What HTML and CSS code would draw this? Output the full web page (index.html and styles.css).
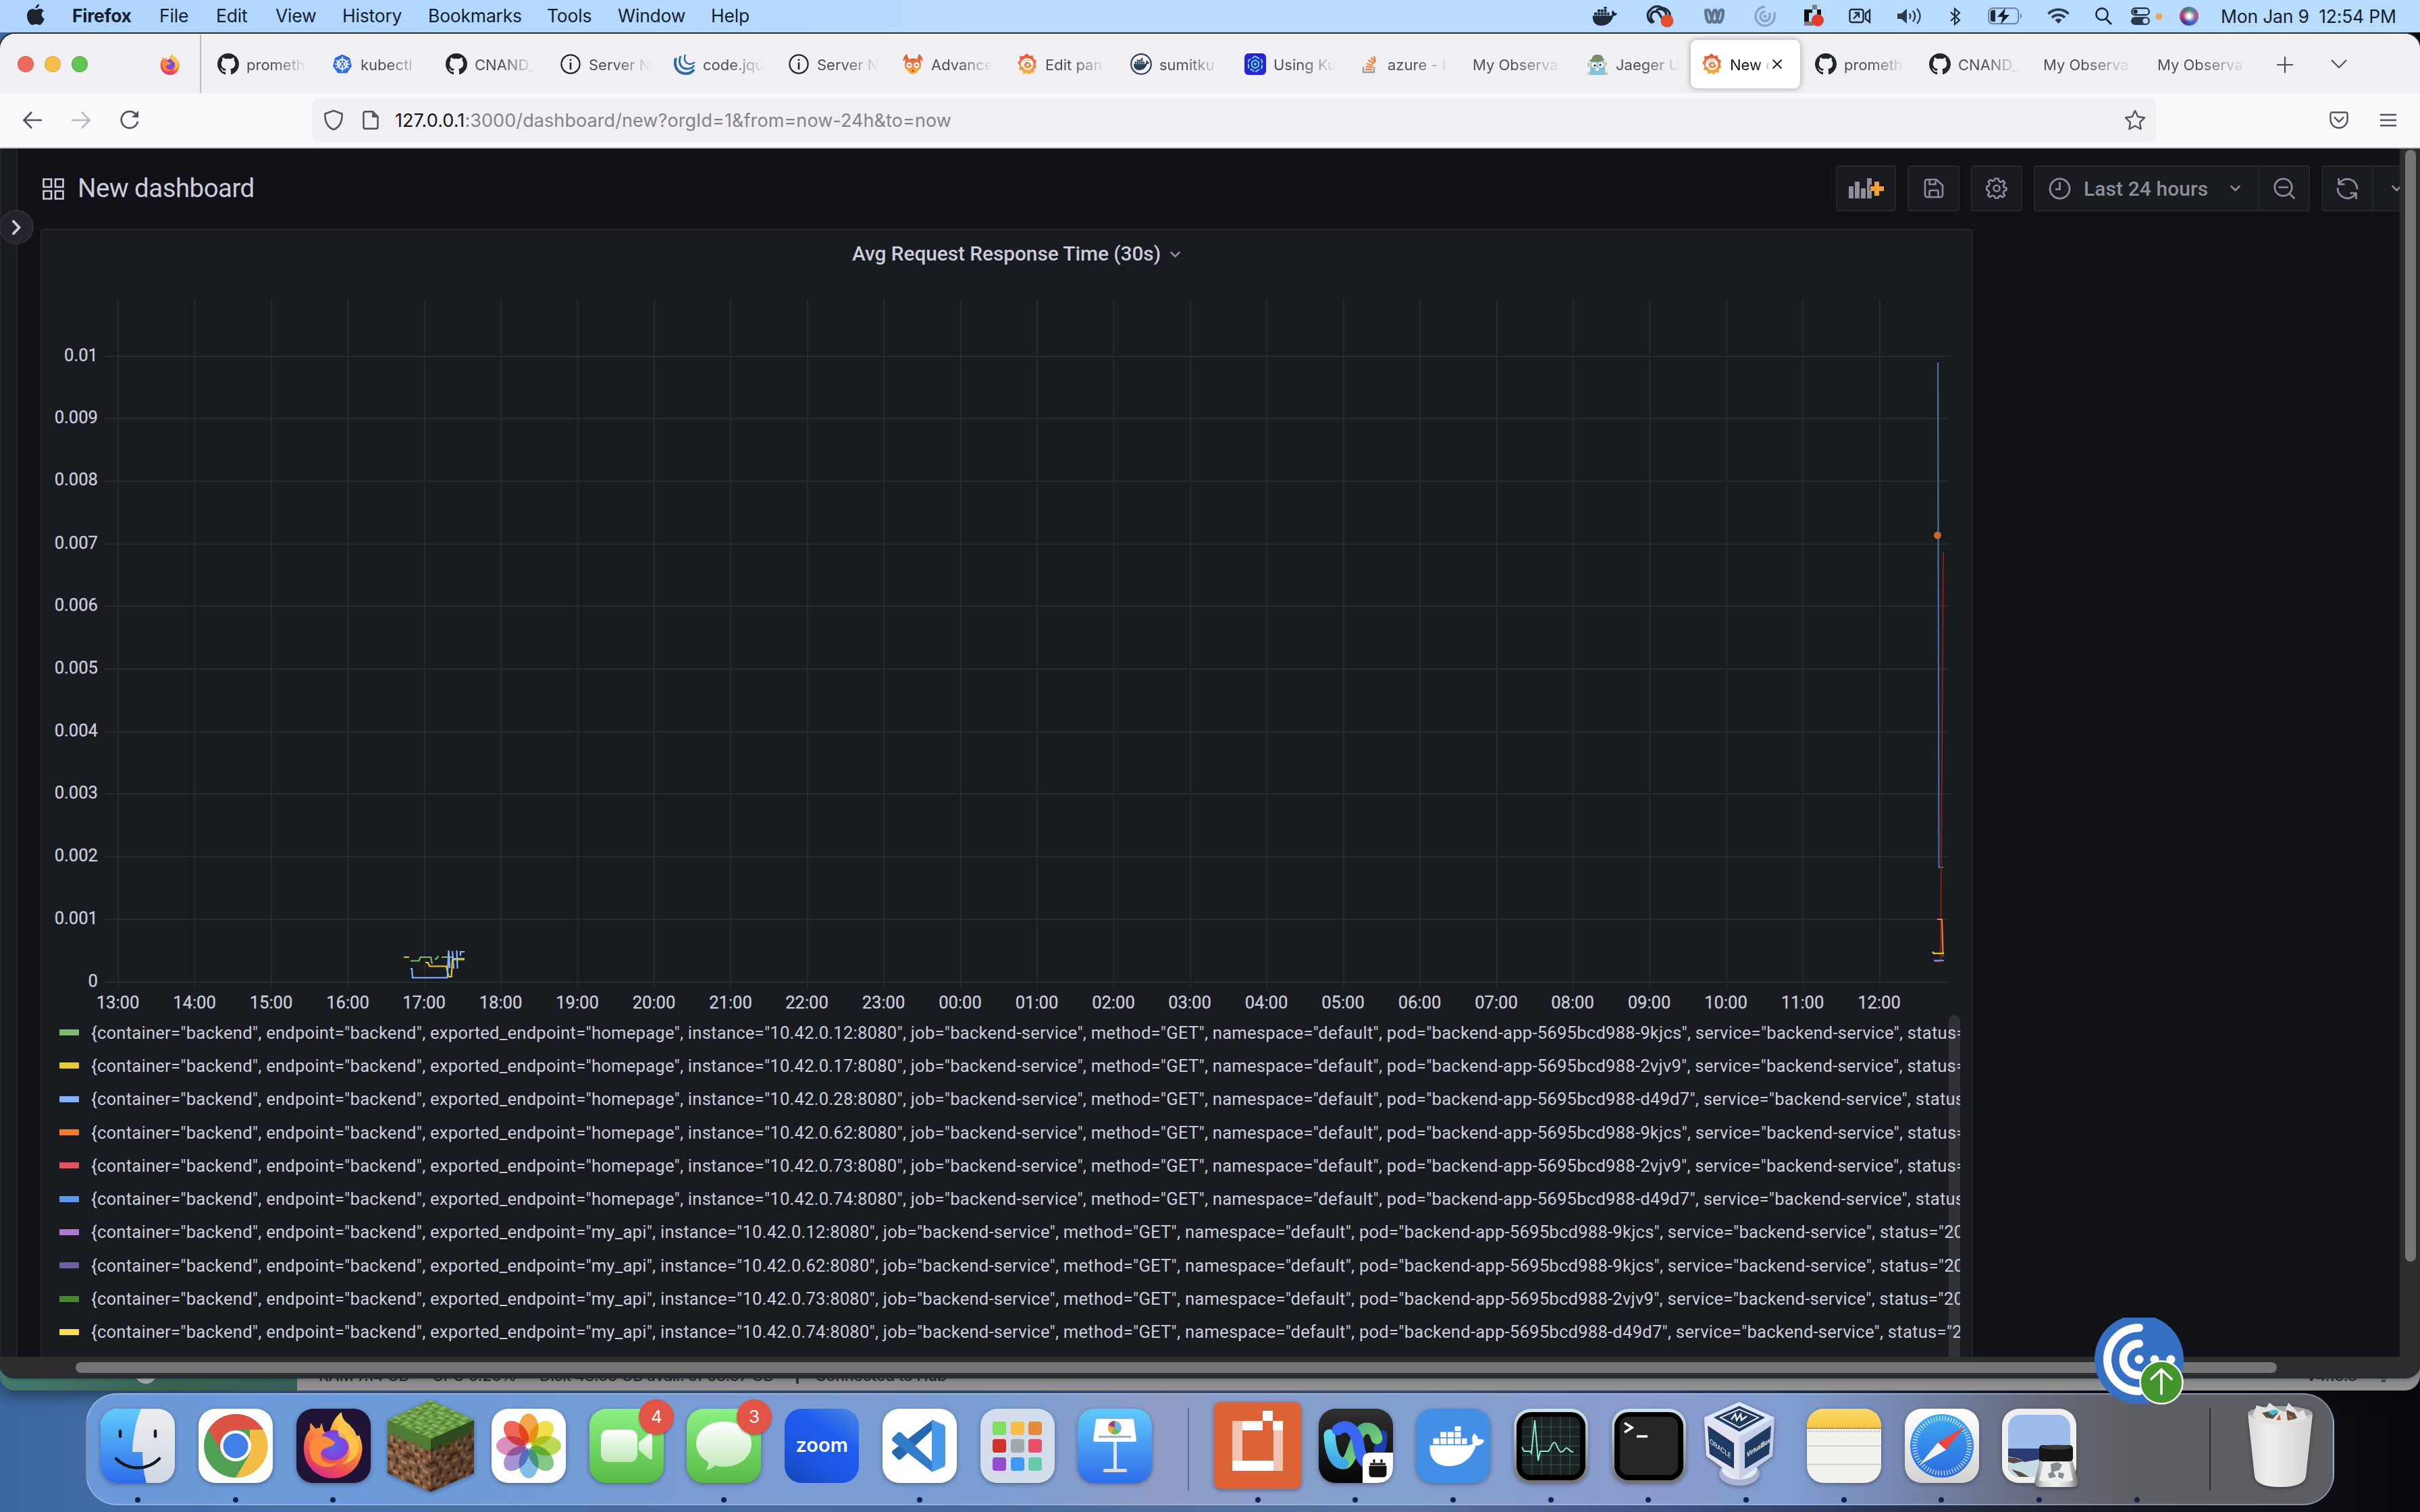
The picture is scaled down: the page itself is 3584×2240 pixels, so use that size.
FILE: index.html
```html
<!DOCTYPE html>
<html lang="en">
<head>
<meta charset="utf-8">
<title>New dashboard - Grafana</title>
<link rel="stylesheet" href="styles.css">
</head>
<body>
<svg class="defs" width="0" height="0">
  <defs>
    <linearGradient id="gGrafana" x1="0" y1="0" x2="0" y2="1"><stop offset="0" stop-color="#e0533a"/><stop offset=".5" stop-color="#e77b3b"/><stop offset="1" stop-color="#f2c441"/></linearGradient>
    <linearGradient id="gFlame" x1=".8" y1="0" x2=".3" y2="1"><stop offset="0" stop-color="#ffe45c"/><stop offset=".4" stop-color="#fb9a3a"/><stop offset=".75" stop-color="#f0504f"/><stop offset="1" stop-color="#d42d88"/></linearGradient>
    <radialGradient id="gGlobe"><stop offset="0" stop-color="#5a67e8"/><stop offset="1" stop-color="#8a3bd8"/></radialGradient>
    <linearGradient id="gFinder" x1="0" y1="0" x2="0" y2="1"><stop offset="0" stop-color="#5fcbfa"/><stop offset="1" stop-color="#2f6ceb"/></linearGradient>
    <linearGradient id="gPaper" x1="0" y1="0" x2="0" y2="1"><stop offset="0" stop-color="#ececee"/><stop offset="1" stop-color="#d0d8e4"/></linearGradient>
    <linearGradient id="gGreen" x1="0" y1="0" x2="0" y2="1"><stop offset="0" stop-color="#8bf182"/><stop offset="1" stop-color="#58bb46"/></linearGradient>
    <linearGradient id="gBubble" x1="0" y1="0" x2="0" y2="1"><stop offset="0" stop-color="#fff"/><stop offset="1" stop-color="#bfe8b6"/></linearGradient>
    <linearGradient id="gDark" x1="0" y1="0" x2="0" y2="1"><stop offset="0" stop-color="#303030"/><stop offset="1" stop-color="#050505"/></linearGradient>
    <linearGradient id="gMetal" x1="0" y1="0" x2="0" y2="1"><stop offset="0" stop-color="#cfe3ea"/><stop offset="1" stop-color="#74716d"/></linearGradient>
    <linearGradient id="gNotes" x1="0" y1="0" x2="0" y2="1"><stop offset="0" stop-color="#fbd96a"/><stop offset="1" stop-color="#f7c544"/></linearGradient>
    <linearGradient id="gSafari" x1="0" y1="0" x2="0" y2="1"><stop offset="0" stop-color="#3eaaf2"/><stop offset="1" stop-color="#2c69e0"/></linearGradient>
    <linearGradient id="gSilver" x1="0" y1="0" x2="0" y2="1"><stop offset="0" stop-color="#fff"/><stop offset="1" stop-color="#d2d2d2"/></linearGradient>
    <linearGradient id="gTrash" x1="0" y1="0" x2="1" y2="0"><stop offset="0" stop-color="#d8d8d8"/><stop offset=".3" stop-color="#eeeeec"/><stop offset="1" stop-color="#d2d2d2"/></linearGradient>
    <linearGradient id="gGlass" x1="0" y1="0" x2="1" y2="0"><stop offset="0" stop-color="#77797b"/><stop offset=".2" stop-color="#d6d8d8"/><stop offset=".5" stop-color="#f2f3f3"/><stop offset=".8" stop-color="#c4c6c6"/><stop offset="1" stop-color="#66686a"/></linearGradient>
    <linearGradient id="gWeb1" x1="0" y1="0" x2="0" y2="1"><stop offset="0" stop-color="#5fd8ee"/><stop offset="1" stop-color="#3fa4e8"/></linearGradient>
    <linearGradient id="gWeb2" x1="0" y1="0" x2="1" y2="1"><stop offset="0" stop-color="#3a9e8a"/><stop offset="1" stop-color="#8fe36a"/></linearGradient>
    <pattern id="pTop" width="8" height="8" patternUnits="userSpaceOnUse"><rect width="8" height="8" fill="#6b9a47"/><path fill="#86bb5b" d="M0 0h1v1H0zM2 1h2v1H2zM5 0h1v2H5zM1 3h1v1H1zM3 3h1v1H3zM6 3h2v1H6zM0 5h2v1H0zM4 5h1v2H4zM6 6h1v1H6zM2 7h1v1H2z"/><path fill="#557f38" d="M1 1h1v1H1zM4 2h1v1H4zM7 1h1v1H7zM2 4h1v1H2zM5 4h1v1H5zM1 6h1v1H1zM7 5h1v1H7zM3 6h1v2H3zM5 7h1v1H5z"/></pattern>
    <pattern id="pDirt" width="8" height="8" patternUnits="userSpaceOnUse"><rect width="8" height="8" fill="#7d563b"/><path fill="#a87a57" d="M0 1h2v1H0zM3 0h1v1H3zM5 2h2v1H5zM1 4h1v1H1zM4 4h1v1H4zM7 5h1v1H7zM2 6h2v1H2zM5 7h1v1H5z"/><path fill="#4f3423" d="M2 0h1v1H2zM6 0h2v1H6zM3 2h1v2H3zM0 3h1v1H0zM6 4h1v1H6zM2 5h1v1H2zM4 6h1v1H4zM0 7h2v1H0zM7 7h1v1H7z"/><path fill="#80807e" d="M4 1h1v1H4zM1 5h1v1H1z"/></pattern>
  </defs>
  <symbol id="github" viewBox="0 0 16 16"><path fill="#22262b" d="M8 0C3.58 0 0 3.58 0 8c0 3.54 2.29 6.53 5.47 7.59.4.07.55-.17.55-.38 0-.19-.01-.82-.01-1.49-2.01.37-2.53-.49-2.69-.94-.09-.23-.48-.94-.82-1.13-.28-.15-.68-.52-.01-.53.63-.01 1.08.58 1.23.82.72 1.21 1.87.87 2.33.66.07-.52.28-.87.51-1.07-1.78-.2-3.64-.89-3.64-3.95 0-.87.31-1.59.82-2.15-.08-.2-.36-1.02.08-2.12 0 0 .67-.21 2.2.82.64-.18 1.32-.27 2-.27s1.36.09 2 .27c1.53-1.04 2.2-.82 2.2-.82.44 1.1.16 1.92.08 2.12.51.56.82 1.27.82 2.15 0 3.07-1.87 3.75-3.65 3.95.29.25.54.73.54 1.48 0 1.07-.01 1.93-.01 2.2 0 .21.15.46.55.38A8.01 8.01 0 0 0 16 8c0-4.42-3.58-8-8-8z"/></symbol>
  <symbol id="info" viewBox="0 0 32 32"><circle cx="16" cy="16" r="13.600" fill="none" stroke="#222" stroke-width="2.200"/><path stroke="#222" stroke-width="2.600" d="M16 13.500v10.500M16 8.500v2.600"/></symbol>
  <symbol id="grafana" viewBox="0 0 32 32"><path fill="url(#gGrafana)" d="M16 0l3.500 4 5-1 1 5 4.500 3-1.500 5 1.500 5-3 2-.5 6-4-.5-3 3.500-4-3-5 2-1-5-5.500-2 1.500-5L2 14l3.500-4L5 4.500l6-.5z"/><path d="M22.500 17a6 6 0 1 0-6 6.500c5.500 0 8.500-4.500 7.500-9C22.800 10 18.500 7.500 14 8.800c-5 1.500-7 6.500-5.500 11" fill="none" stroke="#f3f1f2" stroke-width="2.600"/><circle cx="17" cy="17" r="2" fill="#f3f1f2"/></symbol>
  <symbol id="whale" viewBox="0 0 100 76"><path d="M2 36h68c4 0 8-1 10-3-3-7-2-14 2-19 5 3 7 7 7 11 4-1 8 0 11 2-2 7-8 10-15 10C78 60 62 76 36 76 12 76 0 60 2 36z"/><path d="M8 23h11v11H8zM21 23h11v11H21zM34 23h11v11H34zM47 23h11v11H47zM60 23h9v11h-9zM21 11h11v10H21zM34 11h11v10H34zM47 11h11v10H47zM47 0h11v9H47z"/></symbol>
  <symbol id="firefox" viewBox="0 0 100 100"><path fill="url(#gFlame)" d="M5 55C5 42 9 32 14 27l1 -11 8 9c2-1 4-1 6-1l3-8 3 12 8 8c2-14 8-28 19-36 1 10 5 14 12 19l3 4c4 3 6 8 8 13l4-1c4 12 5 18 4 24-3 26-22 41-44 41C24 100 5 80 5 55z"/><circle cx="50" cy="50" r="23" fill="url(#gGlobe)"/><path fill="#fb8c3c" d="M16 43c8-7 20-9 28-3l8 5c-1 6-6 7-13 9-6 2-9 6-8 12 2 12 16 14 26 10-10 12-34 8-41-8-3-8-3-17 0-25z"/><path fill="#ffc94a" opacity=".85" d="M62 5c-6 8-8 22-3 32 8 2 14 8 15 18 1 12-4 20-12 24 14-2 26-12 26-26 0-18-16-20-20-30-2-5-3-10-6-18z"/></symbol>
  <symbol id="chev" viewBox="0 0 16 10"><path d="M2 2l6 6 6-6" fill="none" stroke="currentColor" stroke-width="2.600" stroke-linecap="round" stroke-linejoin="round"/></symbol>
</svg>

<header class="menubar">
  <nav class="menus">
    <svg class="apple" viewBox="0 0 28 34"><path d="M19 1c.3 3-2.400 6.400-5.400 6.500C13.200 4.500 16 1.400 19 1zM14.200 9.500c1.700 0 3.200-1.400 6-1.400 2.500 0 4.600 1.400 5.700 3-5 3-4.200 9.600.9 11.700C25.400 26.500 22.500 32 19.500 32c-2 0-2.800-1.200-5.200-1.200-2.500 0-3.300 1.200-5.200 1.200C5 32 1 24.500 1 18.500 1 12 5 8.300 9 8.300c2.300 0 3.900 1.200 5.200 1.200z"/></svg>
    <b class="m-app">Firefox</b><span class="m-file">File</span><span class="m-edit">Edit</span><span class="m-view">View</span><span class="m-hist">History</span><span class="m-book">Bookmarks</span><span class="m-tools">Tools</span><span class="m-win">Window</span><span>Help</span>
  </nav>
  <div class="status">
    <svg width="37" height="28"><use href="#whale"/></svg>
    <svg width="42" height="34" viewBox="0 0 42 34"><path d="M9 27C1 22 0 12 7 7c3-5 12-6 17-2 8 1 12 7 11 12M12 26c-8-5-6-15 1-16 8 0 7 8 12 12M15 8c7-4 14 0 15 7" fill="none" stroke="#1d2a38" stroke-width="3.400"/><circle cx="31" cy="24" r="9.500" fill="#e1502b"/></svg>
    <svg width="32" height="24" viewBox="0 0 32 24"><path d="M3 4c1 10 2 17 6 17s4-18 8-18 2 18 6 18 6-9 6-17c-2-3-5-1-6 2-2 8-3 15-7 15S10 3 7 3 3 3 3 4z" fill="none" stroke="#5f7690" stroke-width="4.500"/></svg>
    <svg width="32" height="32" viewBox="0 0 32 32"><path d="M16 2a14 14 0 1 0 14 14V10M16 9a7 7 0 1 0 7 7v-5" fill="none" stroke="#8aa4c2" stroke-width="3.400"/><circle cx="16" cy="16" r="2.600" fill="#8aa4c2"/></svg>
    <svg width="30" height="34" viewBox="0 0 30 34"><path fill="#111" d="M0 7h7v22H0zM7 7h5v5H7zM19 7h6v8h-6z"/><path fill="#7b7b7b" d="M12 0h7v7h-7zM0 25h14v6H0z"/><circle cx="20" cy="23" r="9" fill="#e23b2e"/></svg>
    <svg class="line" width="33" height="24" viewBox="0 0 33 24"><rect x="1.500" y="2" width="20" height="19" rx="3"/><path d="M7 16l8-9M8.500 7H15v7M25 8l6-5v18l-6-5z"/></svg>
    <svg width="37" height="26" viewBox="0 0 37 26"><path d="M0 9h6l8-7v22l-8-7H0z" fill="#2b3b4c"/><path d="M18 9c2 3 2 5 0 8M23 5c4 5 4 11 0 16M29 2c6 7 6 15 0 22" fill="none" stroke="#2b3b4c" stroke-width="2.400"/></svg>
    <svg width="18" height="27" viewBox="0 0 18 27"><path d="M2 7l13 12-7 6V2l7 6L2 20" fill="none" stroke="#1d2a38" stroke-width="2.200"/></svg>
    <svg width="51" height="26" viewBox="0 0 51 26"><rect x="1.200" y="1.200" width="44" height="23" rx="6" fill="none" stroke="#7288a2" stroke-width="2.200"/><path d="M48 9c3 1 3 6 0 8z" fill="#7288a2"/><path d="M4 7c0-2 1-3 3-3h4v17H7c-2 0-3-1-3-3z" fill="#1d2a38"/><path d="M26 1L14 14h8l-3 11 13-14h-8z" fill="#16202c"/></svg>
    <svg width="33" height="24" viewBox="0 0 33 24"><path d="M1.500 8.500a21 21 0 0 1 30 0M7 14a13.500 13.500 0 0 1 19 0" fill="none" stroke="#2b3b4c" stroke-width="3.800"/><path d="M16.500 23l-5-5.500a7 7 0 0 1 10 0z" fill="#2b3b4c"/></svg>
    <svg width="27" height="26" viewBox="0 0 27 26"><circle cx="11" cy="10" r="8.600" fill="none" stroke="#1d2a38" stroke-width="2.600"/><path d="M17 17l8 8" stroke="#1d2a38" stroke-width="3"/></svg>
    <svg width="28" height="26" viewBox="0 0 28 26"><rect x="1.200" y="1.200" width="25.600" height="10" rx="5" fill="none" stroke="#1d2a38" stroke-width="2.200"/><circle cx="6.500" cy="6.200" r="3.200" fill="#1d2a38"/><rect y="14" width="28" height="12" rx="6" fill="#2b3b4c"/><circle cx="21.500" cy="20" r="4" fill="#b7dbff"/></svg>
    <svg width="11" height="11"><circle cx="5.500" cy="5.500" r="5" fill="#e8a45a"/></svg>
    <span class="siri"></span>
    <span class="clock">Mon Jan 9&nbsp; 12:54 PM</span>
  </div>
</header>

<main class="desktop">
  <section class="docker-window">
    <div class="docker-left"><i></i></div>
    <div class="docker-bar"><span class="d-ram">RAM 7.14 GB</span><span class="d-cpu">CPU 0.26%</span><span class="d-disk">Disk 48.09 GB avail. of 58.37 GB</span><svg width="16" height="26" viewBox="0 0 16 26"><path d="M1 6h14l-1 8-4 4v8H6v-8l-4-4z" fill="#333"/></svg><span class="d-hub">Connected to Hub</span><span class="d-ver">v4.16.3</span><svg class="bell" width="14" height="26" viewBox="0 0 14 26"><path d="M1 12h12M2 17h10M4 22h6" stroke="#333" stroke-width="3"/></svg></div>
  </section>

  <section class="browser">
    <div class="tabstrip">
      <div class="lights"><i class="red"></i><i class="amber"></i><i class="green"></i></div>
      <div class="pinned"><svg width="32" height="32"><use href="#firefox"/></svg></div>
      <div class="tabs">
        <div class="tab"><svg><use href="#github"/></svg><span>prometh</span></div>
        <div class="tab"><svg viewBox="0 0 32 32"><path d="M16 1l11.500 5.500L30.500 19 23 30H9L1.500 19 4.500 6.500z" fill="#326de6" stroke="#fff"/><circle cx="16" cy="16" r="7" fill="none" stroke="#fff" stroke-width="2"/><path stroke="#fff" stroke-width="1.600" d="M16 5v22M6.500 10.500l19 11M6.500 21.500l19-11M5 16h22"/><circle cx="16" cy="16" r="2" fill="#326de6"/></svg><span>kubectl</span></div>
        <div class="tab"><svg><use href="#github"/></svg><span>CNAND_</span></div>
        <div class="tab"><svg><use href="#info"/></svg><span>Server N</span></div>
        <div class="tab"><svg viewBox="0 0 32 32" fill="none" stroke="#2f6ba8"><path d="M3 7C-1 20 6 30 18 30c5 0 9-2 12-6" stroke-width="4"/><path d="M10 4C6 14 10 23 20 23c5 0 8-2 10-5" stroke-width="3"/><path d="M17 2c-3 7 0 13 6 14 4 0 6-1 8-3" stroke-width="2.400"/></svg><span>code.jqu</span></div>
        <div class="tab"><svg><use href="#info"/></svg><span>Server N</span></div>
        <div class="tab"><svg viewBox="0 0 32 32"><path d="M1 12C2 6 4 3 7 1l3 8c3-2 9-2 12 0l3-8c3 2 5 5 6 11l-4-3 1 9c0 4-2 6-4 7-2 4-4 6-8 6s-6-2-8-6c-2-1-4-3-4-7l1-9z" fill="url(#gGrafana)"/><circle cx="10.500" cy="17.500" r="4.200" fill="#fff"/><circle cx="21.500" cy="17.500" r="4.200" fill="#fff"/><path d="M8.500 17.500h4M19.500 17.500h4M14 28l2-2.500 2 2.500" stroke="#d24b4b" stroke-width="1.800" fill="none"/></svg><span>Advance</span></div>
        <div class="tab"><svg><use href="#grafana"/></svg><span>Edit pan</span></div>
        <div class="tab"><svg viewBox="0 0 32 32"><circle cx="16" cy="16" r="14.800" fill="#f3f3f5" stroke="#2b4257" stroke-width="2.200"/><svg x="4" y="7" width="25" height="18" fill="#2b4257"><use href="#whale"/></svg></svg><span>sumitku</span></div>
        <div class="tab"><svg viewBox="0 0 32 32"><rect width="32" height="32" rx="6" fill="#2b22d3"/><path d="M16 4.500l10 6v11l-10 6-10-6v-11z" fill="none" stroke="#62e3c4" stroke-width="2" stroke-dasharray="7 2"/><path d="M16 10l5 3v6l-5 3-5-3v-6z" fill="none" stroke="#62e3c4" stroke-width="2"/><circle cx="16" cy="16" r="2" fill="#62e3c4"/></svg><span>Using Ku</span></div>
        <div class="tab"><svg viewBox="0 0 32 32" fill="none"><path d="M7 20v8h16v-8" stroke="#9a9da3" stroke-width="2.600"/><path d="M10 24h10M10.500 19.500l10 1.400M12 15l9 3.500M14.500 10l8 5.500M18.500 6l6 8M23 4l2 8" stroke="#e8823a" stroke-width="2.400"/></svg><span>azure - l</span></div>
        <div class="tab"><span>My Observa</span></div>
        <div class="tab"><svg viewBox="0 0 32 32"><path d="M6 14c0-5 4-7 10-7s10 2 10 7l2 18H4z" fill="#7fc4d8"/><path d="M3 11l5-3c0-5 4-6 8-6s8 1 8 6l3 1c-6 4-17 5-24 2z" fill="#7d8a62"/><path d="M1 14h4v6H1zM27 13h3v5h-3zM1 28h4v4H1zM27 28h4v4h-4z" fill="#d9c3a0"/><circle cx="11" cy="17" r="4" fill="#fff"/><circle cx="21" cy="17" r="4" fill="#fff"/><circle cx="12" cy="18" r="1.600" fill="#111"/><circle cx="20" cy="17" r="1.600" fill="#111"/><path d="M13 21h5v5h-5z" fill="#f2e6d4"/></svg><span>Jaeger U</span></div>
        <div class="tab active"><svg><use href="#grafana"/></svg><span class="short">New d</span><svg class="close" viewBox="0 0 16 16"><path d="M1.500 1.500l13 13M14.500 1.500l-13 13" stroke="#1b1b1f" stroke-width="1.800"/></svg></div>
        <div class="tab"><svg><use href="#github"/></svg><span>prometh</span></div>
        <div class="tab"><svg><use href="#github"/></svg><span>CNAND_</span></div>
        <div class="tab"><span>My Observa</span></div>
        <div class="tab"><span>My Observa</span></div>
      </div>
      <svg class="plus" viewBox="0 0 24 24"><path d="M12 0v24M0 12h24" stroke="#4c4b57" stroke-width="2.200"/></svg>
      <svg class="down" viewBox="0 0 24 14"><path d="M1 1l11 11L23 1" fill="none" stroke="#4c4b57" stroke-width="2.200"/></svg>
    </div>
    <div class="navbar">
      <svg class="back" viewBox="0 0 28 26" fill="none" stroke="#52515e" stroke-width="2.700"><path d="M28 13H2M13 1L1.500 13 13 25"/></svg>
      <svg class="fwd" viewBox="0 0 28 26" fill="none" stroke="#b9b9c0" stroke-width="2.700"><path d="M0 13h26M15 1l11.500 12L15 25"/></svg>
      <svg class="reload" viewBox="0 0 30 30"><path d="M24 6A12.300 12.300 0 1 0 27 17" fill="none" stroke="#52515e" stroke-width="2.700"/><path d="M28 1v10H18z" fill="#52515e"/></svg>
      <div class="urlbar">
        <svg class="shield" viewBox="0 0 30 32"><path d="M15 2l12.500 4.500C28 18 25 26 15 30 5 26 2 18 2.500 6.500z" fill="none" stroke="#55545f" stroke-width="2.600" stroke-linejoin="round"/></svg>
        <svg class="doc" viewBox="0 0 24 28"><path d="M4 1.400h11l7.500 7.500V24a2.600 2.600 0 0 1-2.600 2.600H4A2.600 2.600 0 0 1 1.400 24V4A2.600 2.600 0 0 1 4 1.400z" fill="none" stroke="#55545f" stroke-width="2.600"/><path d="M14 2v8h8z" fill="#55545f"/></svg>
        <span class="url"><b>127.0.0.1</b>:3000/dashboard/new?orgId=1&amp;from=now-24h&amp;to=now</span>
        <svg class="star" viewBox="0 0 32 32"><path d="M16 2l4.300 9 9.700 1.300-7 7 1.600 10L16 24.500 7.400 29.300 9 19.300l-7-7L11.700 11z" fill="none" stroke="#55545f" stroke-width="2.400" stroke-linejoin="round"/></svg>
      </div>
      <svg class="pocket" viewBox="0 0 28 26" fill="none" stroke="#52515e" stroke-width="2.400"><path d="M4 1.500h20A2.500 2.500 0 0 1 26.500 4v8a12.500 12.500 0 0 1-25 0V4A2.500 2.500 0 0 1 4 1.500z"/><path d="M7.500 9l6.500 6.500L20.500 9" stroke-linecap="round"/></svg>
      <svg class="burger" viewBox="0 0 24 20" stroke="#52515e" stroke-width="2.400"><path d="M0 2h24M0 10h24M0 18h24"/></svg>
    </div>

    <div class="viewport">
      <div class="grafana">
        <aside class="rail"></aside>
        <div class="page">
          <div class="topnav">
            <h1><svg viewBox="0 0 32 32" fill="none" stroke="#ccccdc" stroke-width="2.600"><path d="M1.500 1.500h11.500v11.500H1.500zM19 1.500h11.500v11.500H19zM1.500 19h11.500v11.500H1.500zM19 19h11.500v11.500H19z"/></svg>New dashboard</h1>
            <div class="toolbar">
              <div class="btn add"><svg viewBox="0 0 52 30" width="52" height="30"><path fill="#8e8e99" d="M0 12h7v18H0zM9 5h7v25H9zM18 15h7v15h-7zM27 0h7v10h-3v8h3v12h-7z"/><path fill="#f0a13c" d="M38 5h7v7h7v7h-7v7h-7v-7h-6v-7h6z"/></svg></div>
              <div class="btn save"><svg viewBox="0 0 30 30" width="30" height="30" fill="none" stroke="#8e8e99" stroke-width="2.600" stroke-linejoin="round"><path d="M5 2h13.500L28 10.500V25a3 3 0 0 1-3 3H5a3 3 0 0 1-3-3V5a3 3 0 0 1 3-3zM8.500 2v7h9V4M8.500 28v-8a2 2 0 0 1 2-2h9a2 2 0 0 1 2 2v8"/></svg></div>
              <div class="btn gear"><svg viewBox="0 0 32 32" width="32" height="32" fill="none" stroke="#8e8e99" stroke-width="2.600" stroke-linejoin="round"><path d="M13.500 1.500h5l1 4 3 1.200L26 4.500 28 8l-2 3.500 1 3 3.500 1v3L27 20l-1.200 3L28 26.500 25 29l-3.500-2-2.500 1-1 2.500h-4l-1-2.700-3-1.200L6 29l-3-3 2.200-3.500L4 19.500l-2.700-1v-5l3-1L5.500 9 3.800 6 7 3.300l3 2 2.500-1z"/><circle cx="16" cy="16" r="4.500"/></svg></div>
              <div class="btn range"><div class="when"><svg viewBox="0 0 34 34" width="33" height="33" fill="none" stroke="#8e8e99" stroke-width="2.800"><circle cx="17" cy="17" r="15"/><path d="M17 8v10h-5.500" stroke-linecap="round"/></svg><span>Last 24 hours</span><svg class="cv" viewBox="0 0 16 10" width="17" height="10"><use href="#chev"/></svg></div><div class="zoomout"><svg viewBox="0 0 32 32" width="32" height="32" fill="none" stroke="#8e8e99" stroke-width="2.700" stroke-linecap="round"><circle cx="14.500" cy="14.500" r="12.700"/><path d="M24 24l6.500 6.500M8.500 14.500h12"/></svg></div></div>
              <div class="btn refresh"><div class="sync"><svg viewBox="0 0 32 32" width="33" height="33" fill="none" stroke="#8e8e99" stroke-width="2.700" stroke-linecap="round" stroke-linejoin="round"><path d="M3.500 2v7.500H11M4 9A14 14 0 0 1 30 16M28.500 30v-7.500H21M28 23A14 14 0 0 1 2 16"/></svg></div><div class="every"><svg viewBox="0 0 16 10" width="17" height="10"><use href="#chev"/></svg></div></div>
            </div>
          </div>
          <section class="panel">
            <h2>Avg Request Response Time (30s)<svg viewBox="0 0 16 10" width="17" height="10"><use href="#chev"/></svg></h2>
            <svg class="chart" viewBox="62 409 2858 1095" width="2858" height="1095">
              <path class="grid" d="M175 443V1463M288.500 443V1463M402 443V1463M515.500 443V1463M629 443V1463M742 443V1463M855.500 443V1463M969 443V1463M1082 443V1463M1196 443V1463M1309 443V1463M1423 443V1463M1536 443V1463M1649.500 443V1463M1763 443V1463M1876 443V1463M1990 443V1463M2103 443V1463M2217 443V1463M2330 443V1463M2443.500 443V1463M2557 443V1463M2670.500 443V1463M2784 443V1463"/>
              <path class="grid" d="M155 528H2886M155 620H2886M155 713H2886M155 806H2886M155 898H2886M155 991H2886M155 1084H2886M155 1176H2886M155 1269H2886M155 1362H2886M155 1455H2886"/>
              <g class="ylab"><text x="145" y="535">0.01</text><text x="145" y="627">0.009</text><text x="145" y="719">0.008</text><text x="145" y="813">0.007</text><text x="145" y="905">0.006</text><text x="145" y="998">0.005</text><text x="145" y="1091">0.004</text><text x="145" y="1183">0.003</text><text x="145" y="1276">0.002</text><text x="145" y="1369">0.001</text><text x="145" y="1462">0</text></g>
              <g class="xlab"><text x="174.500" y="1494">13:00</text><text x="288" y="1494">14:00</text><text x="401.500" y="1494">15:00</text><text x="515" y="1494">16:00</text><text x="628" y="1494">17:00</text><text x="741.500" y="1494">18:00</text><text x="855" y="1494">19:00</text><text x="968.500" y="1494">20:00</text><text x="1082" y="1494">21:00</text><text x="1195" y="1494">22:00</text><text x="1308.500" y="1494">23:00</text><text x="1422" y="1494">00:00</text><text x="1535.500" y="1494">01:00</text><text x="1649" y="1494">02:00</text><text x="1762" y="1494">03:00</text><text x="1875.500" y="1494">04:00</text><text x="1989" y="1494">05:00</text><text x="2102.500" y="1494">06:00</text><text x="2216" y="1494">07:00</text><text x="2329" y="1494">08:00</text><text x="2442.500" y="1494">09:00</text><text x="2556" y="1494">10:00</text><text x="2669.500" y="1494">11:00</text><text x="2783" y="1494">12:00</text></g>
              <g fill="none" stroke-width="2.200">
                <path stroke="#73bf69" d="M608 1423.500H620.500L622.500 1418H638L640 1428M644 1421L647 1420 649 1416M654 1418H670L671 1420H688"/>
                <path stroke="#f2cc0c" d="M598 1418H606M630 1426H634L636 1431.500H661L664.500 1447H668.500L670 1421.500H688"/>
                <path stroke="#8ab8ff" d="M608 1435H610L611 1448.500H662.500L664.500 1408 666 1434M670 1409L672 1435M676.500 1408L677.500 1435M682 1416V1410H688"/>
                <path stroke="#486fa9" d="M2870 537L2871.500 1285H2878"/>
                <path stroke="#7e1f14" d="M2878 818L2874 1424"/>
                <path stroke="#f07d2e" d="M2869 1362H2876L2877.500 1412"/>
                <path stroke="#fade2a" d="M2862 1410L2864 1412.500H2879"/>
                <path stroke="#37872d" d="M2876 1416H2879"/>
                <path stroke="#5794f2" d="M2864 1423H2879"/>
                <path stroke="#c4474f" stroke-width="1.200" d="M2865 1424.500H2874"/>
              </g>
              <circle cx="2869.500" cy="793" r="5.500" fill="#c76a30"/>
            </svg>
            <div class="legend">
              <div class="track"></div>
              <p><i class="c1"></i>{container="backend", endpoint="backend", exported_endpoint="homepage", instance="10.42.0.12:8080", job="backend-service", method="GET", namespace="default", pod="backend-app-5695bcd988-9kjcs", service="backend-service", status="200"}</p>
              <p><i class="c2"></i>{container="backend", endpoint="backend", exported_endpoint="homepage", instance="10.42.0.17:8080", job="backend-service", method="GET", namespace="default", pod="backend-app-5695bcd988-2vjv9", service="backend-service", status="200"}</p>
              <p><i class="c3"></i>{container="backend", endpoint="backend", exported_endpoint="homepage", instance="10.42.0.28:8080", job="backend-service", method="GET", namespace="default", pod="backend-app-5695bcd988-d49d7", service="backend-service", status="200"}</p>
              <p><i class="c4"></i>{container="backend", endpoint="backend", exported_endpoint="homepage", instance="10.42.0.62:8080", job="backend-service", method="GET", namespace="default", pod="backend-app-5695bcd988-9kjcs", service="backend-service", status="200"}</p>
              <p><i class="c5"></i>{container="backend", endpoint="backend", exported_endpoint="homepage", instance="10.42.0.73:8080", job="backend-service", method="GET", namespace="default", pod="backend-app-5695bcd988-2vjv9", service="backend-service", status="200"}</p>
              <p><i class="c6"></i>{container="backend", endpoint="backend", exported_endpoint="homepage", instance="10.42.0.74:8080", job="backend-service", method="GET", namespace="default", pod="backend-app-5695bcd988-d49d7", service="backend-service", status="200"}</p>
              <p><i class="c7"></i>{container="backend", endpoint="backend", exported_endpoint="my_api", instance="10.42.0.12:8080", job="backend-service", method="GET", namespace="default", pod="backend-app-5695bcd988-9kjcs", service="backend-service", status="200"}</p>
              <p><i class="c8"></i>{container="backend", endpoint="backend", exported_endpoint="my_api", instance="10.42.0.62:8080", job="backend-service", method="GET", namespace="default", pod="backend-app-5695bcd988-9kjcs", service="backend-service", status="200"}</p>
              <p><i class="c9"></i>{container="backend", endpoint="backend", exported_endpoint="my_api", instance="10.42.0.73:8080", job="backend-service", method="GET", namespace="default", pod="backend-app-5695bcd988-2vjv9", service="backend-service", status="200"}</p>
              <p><i class="c10"></i>{container="backend", endpoint="backend", exported_endpoint="my_api", instance="10.42.0.74:8080", job="backend-service", method="GET", namespace="default", pod="backend-app-5695bcd988-d49d7", service="backend-service", status="200"}</p>
            </div>
          </section>
        </div>
        <div class="toggle"><svg viewBox="0 0 14 22" width="15" height="22"><path d="M2.500 2l8.500 9-8.500 9" fill="none" stroke="#ccccdc" stroke-width="4" stroke-linecap="round" stroke-linejoin="round"/></svg></div>
      </div>
      <div class="vscroll"><i></i></div>
    </div>
    <div class="hscroll"><i></i></div>
  </section>

  <footer class="dock">
    <div class="app run"><svg viewBox="0 0 110 110"><rect width="110" height="110" rx="25" fill="url(#gPaper)"/><path d="M25 0h35C51 22 48 42 47 64h15c0 16 2 32 6 46H25A25 25 0 0 1 0 85V25A25 25 0 0 1 25 0z" fill="url(#gFinder)"/><path d="M29 33v8M81 33v8M23 74c18 18 46 18 64 0" fill="none" stroke="#161a20" stroke-width="4.500" stroke-linecap="round"/></svg></div>
    <div class="app run"><svg viewBox="0 0 110 110"><rect width="110" height="110" rx="25" fill="#fbfcfe"/><circle cx="55" cy="55" r="47" fill="#4f9f55"/><path d="M15 31a47 47 0 0 1 81 0H55L34 64z" fill="#dc5243"/><path d="M96 31a47 47 0 0 1-41 71l21-35V31z" fill="#f3bc44"/><circle cx="55" cy="55" r="23" fill="#fff"/><circle cx="55" cy="55" r="18.500" fill="#4180e8"/></svg></div>
    <div class="app run"><svg viewBox="0 0 110 110"><rect width="110" height="110" rx="25" fill="#1f1336"/><svg x="6" y="5" width="98" height="98"><use href="#firefox"/></svg></svg></div>
    <div class="app"><svg class="cube" viewBox="0 0 128 136"><rect width="16" height="16" fill="url(#pTop)" transform="matrix(4 1.850 -4 1.850 64 0)"/><g transform="matrix(4 1.750 0 4.900 0 30)"><rect width="16" height="16" fill="url(#pDirt)"/><path fill="#4f7d36" d="M0 0h16v3h-1v1h-2V3h-1v2h-1V3H9v2H8V3H7v1H5V3H4v2H3V3H2v1H0z"/></g><g transform="matrix(4 -1.750 0 4.900 64 58)"><rect width="16" height="16" fill="url(#pDirt)"/><path fill="#3f672c" d="M0 0h16v2h-1v2h-1V3h-2v2h-1V3H9v1H7V3H6v2H5V3H3v1H1V3H0z"/><rect width="16" height="16" fill="#000" opacity=".28"/></g></svg></div>
    <div class="app"><svg viewBox="0 0 110 110"><rect width="110" height="110" rx="25" fill="#fdfdfd"/><g class="petals"><ellipse cx="55" cy="29" rx="14.500" ry="22" fill="#f5a03a"/><ellipse cx="55" cy="29" rx="14.500" ry="22" fill="#f1de3d" transform="rotate(45 55 55)"/><ellipse cx="55" cy="29" rx="14.500" ry="22" fill="#b6d84a" transform="rotate(90 55 55)"/><ellipse cx="55" cy="29" rx="14.500" ry="22" fill="#7cc67c" transform="rotate(135 55 55)"/><ellipse cx="55" cy="29" rx="14.500" ry="22" fill="#7ab8ea" transform="rotate(180 55 55)"/><ellipse cx="55" cy="29" rx="14.500" ry="22" fill="#9f8cd0" transform="rotate(225 55 55)"/><ellipse cx="55" cy="29" rx="14.500" ry="22" fill="#d987b6" transform="rotate(270 55 55)"/><ellipse cx="55" cy="29" rx="14.500" ry="22" fill="#ee5b4c" transform="rotate(315 55 55)"/></g></svg></div>
    <div class="app"><svg viewBox="0 0 110 110"><rect width="110" height="110" rx="25" fill="url(#gGreen)"/><rect x="17" y="31" width="54" height="48" rx="11" fill="url(#gBubble)"/><path d="M73 50l15-13q5-3 5 2v33q0 5-5 2L73 61z" fill="url(#gBubble)"/></svg><em>4</em></div>
    <div class="app run"><svg viewBox="0 0 110 110"><rect width="110" height="110" rx="25" fill="url(#gGreen)"/><path d="M55 19c24 0 41 14 41 33S79 86 55 86c-5 0-9-1-13-2-4 4-8 6-14 7 3-4 5-8 4-12C21 73 14 63 14 52c0-19 17-33 41-33z" fill="url(#gBubble)"/></svg><em>3</em></div>
    <div class="app"><div class="zoomapp">zoom</div></div>
    <div class="app run"><svg viewBox="0 0 110 110"><rect width="110" height="110" rx="25" fill="#fff"/><path d="M15 67l8 8q2 1 4 0l47-44V17L15 62q-2 3 0 5z" fill="#2668ac"/><path d="M15 43l8-8q2-1 4 0l47 44v15L15 48q-2-3 0-5z" fill="#307bca"/><path d="M73 16l18 8q2 1 2 4v54q0 3-2 4l-18 8z" fill="#479aea"/></svg></div>
    <div class="app"><svg viewBox="0 0 110 110"><rect width="110" height="110" rx="25" fill="#d3ddec"/><rect x="18" y="19" width="20" height="20" rx="4" fill="#7fdf62"/><rect x="45" y="19" width="20" height="20" rx="4" fill="#f4bf44"/><rect x="71" y="19" width="20" height="20" rx="4" fill="#e58a3a"/><rect x="18" y="45" width="20" height="20" rx="4" fill="#cf3228"/><rect x="45" y="45" width="20" height="20" rx="4" fill="#a2a9ac"/><rect x="71" y="45" width="20" height="20" rx="4" fill="#e8506a"/><rect x="18" y="72" width="20" height="20" rx="4" fill="#964cce"/><rect x="45" y="72" width="20" height="20" rx="4" fill="#3f98f2"/><rect x="71" y="72" width="20" height="20" rx="4" fill="#66cbaa"/></svg></div>
    <div class="app"><svg viewBox="0 0 110 110"><rect width="110" height="110" rx="25" fill="url(#gFinder)"/><path d="M53 48h5v42h-5z" fill="#dfe3ea"/><rect x="38" y="89" width="35" height="5" rx="2" fill="#d9dbe0"/><path d="M30 15h50q3 0 3 2l4 29q0 3-3 3H26q-3 0-3-3l4-29q0-2 3-2z" fill="#fff"/><path d="M31 40h48v3H31z" fill="#9db0c4"/><circle cx="55" cy="28" r="10" fill="#6fb8e8"/><path d="M55 28V18a10 10 0 0 0-9.500 7z" fill="#9b3f6e"/><path d="M55 28l-9.500-3a10 10 0 0 0 4 11.500z" fill="#f0a13c"/><path d="M55 28l-5.500 8.500A10 10 0 0 0 63 34z" fill="#6cbd55"/></svg></div>
    <div class="sep"></div>
    <div class="app run"><svg class="tall" viewBox="0 0 129 129"><rect width="129" height="129" rx="10" fill="#de6437"/><path fill="#fff" d="M72 13h15v15H72zM42 28h30v14H42zM87 28h15v14H87zM27 87h61v15H27z"/><path fill="#f2c5b3" d="M27 28h15v59H27zM88 42h14v60H88z"/></svg></div>
    <div class="app run"><svg viewBox="0 0 110 110"><rect width="110" height="110" rx="25" fill="url(#gDark)"/><g fill="none" stroke-linecap="round" stroke-width="17"><path d="M93 40c-1 18-5 40-16 41" stroke="#1e3fb0"/><path d="M16 39c1 22 7 42 21 42 14 0 16-52 34-52 8 0 13 5 15 15" stroke="url(#gWeb2)"/><path d="M16 39c1 22 7 42 20 42" stroke="url(#gWeb1)"/><path d="M28 31c20-14 30 10 32 28 2 12 7 22 15 22" stroke="#3a66f0"/></g><path d="M65 110V77q0-12 12-12h33v20q0 25-25 25z" fill="#fff"/><path d="M76 82h23M76 86h23v10q0 4-4 4H80q-4 0-4-4zM82 75v5M93 75v5" stroke="#111" stroke-width="3" fill="#111"/></svg></div>
    <div class="app run"><svg viewBox="0 0 110 110"><rect width="110" height="110" rx="25" fill="#438fe6"/><svg x="19" y="26" width="82" height="59" viewBox="0 0 100 76" preserveAspectRatio="none" fill="#fff"><use href="#whale" width="100" height="76"/></svg></svg></div>
    <div class="app run"><svg viewBox="0 0 110 110"><rect width="110" height="110" rx="25" fill="url(#gMetal)"/><rect x="4" y="5" width="102" height="101" rx="21" fill="#000"/><rect x="12" y="12" width="86" height="86" rx="12" fill="#1a2222"/><path d="M27 12v86M41 12v86M55 12v86M69 12v86M83 12v86M12 27h86M12 41h86M12 55h86M12 69h86M12 83h86" stroke="#3a5450" stroke-width="1.200"/><path d="M12 57l3 6h9l2 3 5-49 5 60 3-14h12c4-3 5-13 9-13s5 14 10 14 5-6 8-6 4 6 10 6" fill="none" stroke="#8fe8cf" stroke-width="2"/></svg></div>
    <div class="app run"><svg viewBox="0 0 110 110"><rect width="110" height="110" rx="25" fill="url(#gMetal)"/><rect x="4" y="5" width="102" height="101" rx="21" fill="#000"/><rect x="12" y="12" width="86" height="86" rx="12" fill="#262626"/><path d="M19 21l11 7-11 7M37 41h16" fill="none" stroke="#fff" stroke-width="3.500"/></svg></div>
    <div class="app run"><svg class="vbox" viewBox="0 0 110 128"><ellipse cx="55" cy="108" rx="30" ry="18" fill="#a9b4d4"/><ellipse cx="55" cy="102" rx="26" ry="15" fill="#e6eaf6"/><path d="M55 2l52 23-3 57-49 35L6 82 3 25z" fill="#c3cfe8"/><path d="M55 2l52 23-52 29L3 25z" fill="#dce6f8"/><path d="M55 54v63L6 82 3 25z" fill="#e3e0ee"/><path d="M55 8l38 17-38 21-38-21z" fill="#1f3a63"/><path d="M55 13l28 12-28 15-28-15z" fill="none" stroke="#fff" stroke-width="1.800"/><path d="M43 28l6-8 2 9 6-9 1 9 8-6" fill="none" stroke="#fff" stroke-width="2.200"/><path d="M8 37l39 26v38L11 79z" fill="#1f3a63"/><path d="M102 37L63 63v38l36-22z" fill="#1f3a63"/><text transform="matrix(.8 .58 0 1 11 63)">ORACLE</text><text transform="matrix(.68 -.44 0 1 66 84)" font-weight="700">VirtualBox</text></svg></div>
    <div class="app run"><svg viewBox="0 0 110 110"><rect width="110" height="110" rx="25" fill="#f3f1ec"/><path d="M0 28v-3A25 25 0 0 1 25 0h60a25 25 0 0 1 25 25v3z" fill="url(#gNotes)"/><path d="M0 29h110" stroke="#a59a7c" stroke-width="2"/><path d="M2 33.500h106" stroke="#b9b6ae" stroke-width="2" stroke-dasharray="2 2"/><path d="M0 55h110M0 82.500h110" stroke="#d2d0cb" stroke-width="2"/></svg></div>
    <div class="app run"><svg viewBox="0 0 110 110"><rect width="110" height="110" rx="25" fill="url(#gSilver)"/><circle cx="55" cy="55" r="47" fill="url(#gSafari)"/><circle cx="55" cy="55" r="40.500" fill="none" stroke="#e6f2fc" stroke-width="7" stroke-dasharray="1.200 3.040"/><path d="M88 27L61 61 49 50z" fill="#e8483e"/><path d="M49 50l12 11-39 22z" fill="#f2f2f2"/></svg></div>
    <div class="app run"><svg class="preview" viewBox="0 0 116 118"><rect width="110" height="110" rx="25" fill="#efefef"/><path d="M27 9h56a18 18 0 0 1 18 18v34H9V27A18 18 0 0 1 27 9z" fill="#9dbcec"/><path d="M9 59h92v24a18 18 0 0 1-18 18H27A18 18 0 0 1 9 83z" fill="#2c3c72"/><path d="M9 71l14 2 10 6 22-4v26H27A18 18 0 0 1 9 83z" fill="#c6dbe2"/><path d="M9 72l12 1 10 5-14 3-8-2zM14 90l14 4 12 7H26z" fill="#5a4a42"/><path d="M56 76h48l9 33q0 7-9 7H57q-9 0-9-7z" fill="url(#gGlass)"/><path d="M62 79h37l6 27q-25 8-50 0z" fill="#ecedee"/><path d="M72 82l10-3 7 4-4 8-12 3zM68 96l8-3 4 8-10 2zM84 94l8 2-2 8-7-3z" fill="#858a92"/><rect x="55" y="54" width="50" height="24" rx="5" fill="#161616"/><ellipse cx="80" cy="57" rx="22" ry="3.500" fill="#3a3a3a"/></svg></div>
    <div class="app run"></div>
    <div class="sep dark"></div>
    <div class="app"><svg class="bin" viewBox="0 0 98 128"><path d="M1 18q48 18 96 0l-10 92q-3 16-38 16t-38-16z" fill="url(#gTrash)"/><ellipse cx="49" cy="17" rx="48" ry="11" fill="#a6a6a6"/><path d="M8 20L14 5l14 4 5-8 13 10 10 4 5-14 14 14 9-3 4 12-12 6-27 4-28-4z" fill="#e3e1de"/><path d="M22 16l10-2 14 2-8 9-10-2zM58 12l12 4 4 8-14 4z" fill="#5b5048"/><path d="M30 14l12-3 5 3-9 6z" fill="#49bdd0"/><path d="M43 27l5-9 2 9zM60 19l8 3-4 4z" fill="#d0622e"/><path d="M2 18q47 20 94 0-8 9-47 9T2 18z" fill="#f2f2f2" opacity=".7"/></svg></div>
  </footer>

  <svg class="citrix" viewBox="3102 1952 134 132" width="134" height="132"><circle cx="3168" cy="2014" r="66" fill="#3670c2"/><g fill="none" stroke="#fff" stroke-width="12" stroke-linecap="round"><path d="M3168 1967a47 47 0 0 0 0 94"/><path d="M3168 1990.500a23.500 23.500 0 0 0 0 47"/></g><g fill="#fff"><circle cx="3168" cy="2014" r="6.500"/><circle cx="3191" cy="2014" r="6.500"/><circle cx="3215" cy="2014" r="6.500"/></g><circle cx="3201" cy="2048" r="31.500" fill="#45952f" stroke="#fff" stroke-width="2.500"/><path d="M3201 2065v-35M3186 2043l15-14 15 14" fill="none" stroke="#fff" stroke-width="3.500" stroke-linecap="round"/></svg>
</main>
</body>
</html>
```

FILE: styles.css
```css
* { box-sizing: border-box; }
body {
  margin: 0;
  width: 3584px;
  height: 2240px;
  overflow: hidden;
  font-family: Inter, "Liberation Sans", sans-serif;
  background: linear-gradient(90deg, #3c689f 0, #4a70a8 12%, #466a9a 40%, #5b719f 58%, #3b4f80 70%, #171a24 86%, #08090d 100%);
}
.defs { position: absolute; }
svg { display: block; flex: none; }
p, h1, h2 { margin: 0; }

/* menu bar */
.menubar {
  display: flex;
  height: 48px;
  background: linear-gradient(90deg, #aed4ff, #b8dbff 40%, #b8dcff);
  color: #16202c;
  font-size: 26.500px;
  line-height: 46px;
  letter-spacing: -0.200px;
  white-space: nowrap;
}
.menus { display: flex; padding-left: 39px; }
.apple { width: 28px; height: 34px; margin: 5px 40px 0 0; fill: #1c242e; }
.m-app { width: 129px; font-weight: 700; letter-spacing: -0.300px; }
.m-file { width: 84px; }
.m-edit { width: 88px; }
.m-view { width: 99px; }
.m-hist { width: 127px; }
.m-book { width: 176px; }
.m-tools { width: 105px; }
.m-win { width: 138px; }
.status {
  display: grid;
  grid-template-columns: 80px 85px 75px 74px 66px 72px 77px 57px 88px 70px 54px 36px 36px 61px 295px;
  align-items: center;
  margin-left: auto;
}
.status svg { fill: #1d2a38; }
.status .line { fill: none; stroke: #1d2a38; stroke-width: 2.400px; }
.siri {
  width: 28px;
  height: 28px;
  border-radius: 50%;
  background: radial-gradient(circle, #fff 0 12%, transparent 45%), conic-gradient(#3d8f8c, #b05a92 90deg, #3b6fd0 150deg, #46328c 210deg, #c43a78 280deg, #2f8f6e);
}

.desktop { position: relative; height: 2192px; }

/* window at the back */
.docker-window {
  position: absolute;
  left: 0;
  top: 1932px;
  width: 3584px;
  height: 80px;
  display: flex;
  border-radius: 0 0 22px 22px;
  overflow: hidden;
  box-shadow: 0 6px 24px rgba(0, 0, 0, .5);
}
.docker-left { width: 440px; background: linear-gradient(90deg, #447a6c, #37614f 60%, #355f56); }
.docker-left i { display: block; width: 32px; height: 32px; margin: 38px 0 0 200px; border-radius: 50%; background: #a5a5a5; }
.docker-bar {
  flex: 1;
  display: flex;
  align-items: flex-start;
  padding: 44px 0 0 32px;
  background: linear-gradient(#7a7a7a 60%, #939393);
  color: #2a2a2c;
  font-size: 23px;
  font-weight: 500;
  line-height: 28px;
  letter-spacing: -0.300px;
  white-space: nowrap;
}
.d-ram { width: 168px; }
.d-cpu { width: 159px; }
.d-disk { width: 374px; }
.d-hub { margin-left: 18px; }
.d-ver { margin-left: auto; }
.bell { margin: 0 47px 0 32px; }

/* browser window */
.browser {
  position: absolute;
  left: 0;
  top: 2px;
  width: 3584px;
  height: 1990px;
  display: flex;
  flex-direction: column;
  border-radius: 22px;
  overflow: hidden;
  background: #2e2e2e;
  box-shadow: 0 0 0 2px #1d2b3b, 0 2px 5px rgba(0, 0, 0, .5);
}
.tabstrip { display: flex; align-items: center; height: 88px; background: #f0eff4; border-top: 2px solid #fff; }
.lights { display: flex; gap: 16px; width: 234px; padding-left: 26px; }
.lights i { width: 24px; height: 24px; border-radius: 50%; border: 1px solid rgba(0, 0, 0, .12); }
.red { background: #ed6a5e; }
.amber { background: #f4be4f; }
.green { background: #61c454; }
.pinned { display: flex; align-items: center; width: 64px; height: 88px; padding-left: 2px; border-right: 2px solid #bdbcc4; }
.tabs { display: flex; padding-left: 5px; }
.tab {
  display: flex;
  align-items: center;
  gap: 11px;
  width: 162px;
  height: 72px;
  margin: 0 3.500px;
  padding: 0 14px 0 15.500px;
  border-radius: 9px;
  color: #4f4f57;
  font-size: 22px;
}
.tab svg { width: 32px; height: 32px; }
.tab svg svg { width: 25px; height: 18px; }
.tab span {
  flex: 1;
  padding-top: 2px;
  white-space: nowrap;
  line-height: 30px;
  -webkit-mask-image: linear-gradient(90deg, #000 45%, transparent);
  mask-image: linear-gradient(90deg, #000 45%, transparent);
}
.tab.active { background: #fff; color: #15141a; box-shadow: 0 0 8px rgba(0, 0, 0, .35); }
.tab.active .short { flex: none; width: 60px; -webkit-mask-image: linear-gradient(90deg, #000 70%, transparent); mask-image: linear-gradient(90deg, #000 70%, transparent); }
.tab .close { width: 16px; height: 16px; margin-left: -9px; }
.plus { width: 24px; height: 24px; margin: 2px 0 0 27px; }
.down { width: 24px; height: 14px; margin-left: 56px; }
.navbar { display: flex; align-items: center; height: 82px; background: #f9f9fb; border-bottom: 2px solid #c9c9cd; }
.back { width: 28px; height: 26px; margin-left: 34px; }
.fwd { width: 28px; height: 26px; margin-left: 44px; }
.reload { width: 30px; height: 30px; margin-left: 43px; }
.urlbar {
  display: flex;
  align-items: center;
  width: 2730px;
  height: 64px;
  margin-left: 256px;
  padding: 0 15px 0 16px;
  border-radius: 8px;
  background: #f0eff4;
  font-size: 27px;
  line-height: 40px;
  letter-spacing: .080px;
  color: #84838a;
}
.shield { width: 30px; height: 32px; }
.doc { width: 24px; height: 28px; margin: 0 24px 0 28px; }
.url { flex: 1; padding-top: 2px; white-space: nowrap; }
.url b { font-weight: 400; color: #15141a; }
.star { width: 32px; height: 32px; }
.pocket { width: 28px; height: 26px; margin-left: 257px; }
.burger { width: 24px; height: 20px; margin-left: 47px; }

/* page */
.viewport { display: flex; height: 1790px; }
.grafana { position: relative; display: flex; width: 3554px; background: #111217; overflow: hidden; font-family: Roboto, sans-serif; color: #ccccdc; }
.rail { flex: none; width: 26px; background: #181b1f; border-left: 1px solid #2a2d31; border-right: 2px solid #25272c; }
.page { width: 3528px; }
.toggle {
  position: absolute;
  left: -1px;
  top: 91px;
  width: 51px;
  height: 51px;
  display: flex;
  align-items: center;
  justify-content: center;
  border: 2px solid #2f3136;
  border-radius: 50%;
  background: #22252b;
}
.topnav { display: grid; grid-template-columns: 2693px 1fr; height: 119px; padding-top: 25px; }
.topnav h1 { display: flex; align-items: center; gap: 20px; height: 68px; padding: 0 0 2px 37px; font-size: 38.400px; font-weight: 400; letter-spacing: -0.500px; }
.topnav h1 svg { width: 32px; height: 32px; margin-top: 4px; }
.toolbar { display: flex; gap: 17px; overflow: hidden; color: #8e8e99; }
.btn { flex: none; display: flex; align-items: center; justify-content: center; height: 68px; border: 2px solid #25272c; border-radius: 4px; background: #181b1f; }
.add { width: 89px; }
.save { width: 77px; }
.gear { width: 76px; }
.range { width: 409px; }
.when { display: flex; align-items: center; width: 332px; height: 64px; padding-left: 20px; border-right: 2px solid #25272c; font-size: 29.870px; font-weight: 500; letter-spacing: .150px; }
.when span { width: 216px; padding-left: 19px; white-space: nowrap; }
.when .cv { margin-left: 19px; }
.zoomout { flex: 1; display: flex; justify-content: center; }
.refresh { width: 152px; }
.sync { display: flex; align-items: center; justify-content: center; width: 75px; height: 64px; border-right: 2px solid #25272c; }
.every { flex: 1; padding-left: 26px; }
.panel { width: 2862px; height: 1700px; margin-left: 34px; border: 2px solid #25272c; border-radius: 5px; background: #181b1f; }
.panel h2 { display: flex; align-items: center; justify-content: center; gap: 13px; height: 68px; padding-left: 29px; font-size: 29.870px; font-weight: 500; letter-spacing: -0.060px; }
.panel h2 svg { margin-top: 4px; color: #8e8e99; }
.grid { stroke: #26292e; stroke-width: 2; }
.ylab, .xlab { fill: #ccccdc; stroke: #ccccdc; stroke-width: .3px; font-size: 25.600px; }
.ylab { text-anchor: end; }
.xlab { text-anchor: middle; }
.legend { position: relative; width: 2841px; height: 600px; padding: 1px 0 0 26px; overflow: hidden; }
.track { position: absolute; right: 0; top: 0; width: 17px; height: 600px; border-radius: 9px 9px 0 0; background: #303237; }
.legend p { position: relative; display: flex; align-items: center; height: 49.300px; font-size: 25.600px; letter-spacing: .231px; white-space: pre; }
.legend i { flex: none; width: 29px; height: 9px; margin-right: 18px; border-radius: 1px; }
.c1 { background: #7fb96b; }
.c2 { background: #eac93f; }
.c3 { background: #8ab0f5; }
.c4 { background: #f07d2e; }
.c5 { background: #e0525f; }
.c6 { background: #6495ec; }
.c7 { background: #ae7ad3; }
.c8 { background: #6f5f9f; }
.c9 { background: #4b8534; }
.c10 { background: #f8de50; }
.vscroll { width: 30px; padding: 2px 0 0 8px; background: #2e2e2e; }
.vscroll i { display: block; width: 16px; height: 1647px; border-radius: 8px; background: #757575; }
.hscroll { height: 30px; padding: 8px 0 0 112px; background: #2e2e2e; }
.hscroll i { display: block; width: 3260px; height: 16px; border-radius: 8px; background: #757575; }

/* dock */
.dock {
  position: absolute;
  left: 127px;
  top: 2016px;
  width: 3330px;
  height: 166px;
  display: flex;
  padding: 0 3px;
  border: 2px solid rgba(190, 205, 235, .45);
  border-radius: 46px;
  background: linear-gradient(90deg, #6b99d9 0, #6e9bd8 15%, #7b9cd2 30%, #799ed3 40%, #8f9cc6 48%, #82a0d0 58%, #8a9ccd 70%, #7f9cd0 76%, #7486ae 81%, #66697a 87%, #5e5f64 91%, #5d5e63 100%);
}
.app { position: relative; flex: none; width: 144.700px; height: 162px; }
.app > svg { position: relative; width: 110px; height: 110px; margin: 21px auto 0; filter: drop-shadow(0 2px 3px rgba(0, 0, 0, .35)); }
.app > .cube { width: 128px; height: 136px; margin-top: 8px; }
.app > .tall { width: 129px; height: 129px; margin-top: 11px; }
.app > .vbox { height: 128px; margin: 9px 0 0 7px; }
.app > .bin { width: 98px; height: 128px; margin-top: 11px; }
.app > .preview { width: 116px; height: 118px; margin-left: 17px; }
.vbox text { fill: #fff; font-size: 10px; }
.petals { mix-blend-mode: multiply; }
.petals ellipse { mix-blend-mode: multiply; opacity: .92; }
.run::after { content: ""; position: absolute; left: 68px; top: 152px; width: 8px; height: 8px; border-radius: 50%; background: #10234d; }
.app em {
  position: absolute;
  left: 91px;
  top: 7px;
  width: 52px;
  height: 52px;
  border-radius: 50%;
  background: #e25546;
  box-shadow: 0 2px 3px rgba(0, 0, 0, .3);
  color: #fff;
  font-size: 26px;
  font-style: normal;
  line-height: 52px;
  text-align: center;
}
.zoomapp {
  width: 110px;
  height: 110px;
  margin: 21px auto 0;
  border-radius: 25px;
  background: linear-gradient(215deg, #4a8ae0, #1f5cf0 35%, #1d56e4 65%, #1444b4);
  color: #fff;
  font-size: 29px;
  font-weight: 600;
  line-height: 107px;
  text-align: center;
}
.sep { flex: none; width: 2px; height: 122px; margin: 20px 30px 0 35px; background: #56698f; }
.sep.dark { background: #2c2d31; }
.citrix { position: absolute; left: 3102px; top: 1904px; }
```
